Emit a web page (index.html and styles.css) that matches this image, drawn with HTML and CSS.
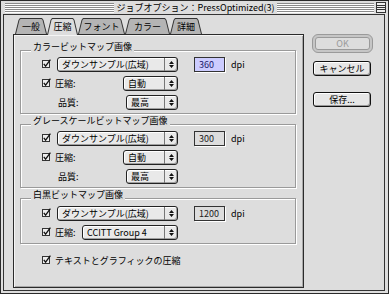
FILE: index.html
```html
<!DOCTYPE html>
<html lang="ja">
<head>
<meta charset="utf-8">
<title>ジョブオプション</title>
<link rel="stylesheet" href="styles.css">
</head>
<body>
<div class="window">
  <div class="titlebar">
    <span class="stripes"></span>
    <span class="title">ジョブオプション：PressOptimized(3)</span>
    <span class="title-right">
      <span class="stripes"></span>
      <svg class="collapse" width="10" height="11" viewBox="0 0 10 11"><rect x="0.5" y="0.5" width="9" height="10" fill="#eee" stroke="#333"/><path d="M1 3.5H9M1 5.5H9M1 7.5H9" stroke="#333"/></svg>
    </span>
  </div>
  <div class="content">
    <div class="left">
      <div class="tabs">
        <div class="tab t1"><span>一般</span></div>
        <div class="tab t2 active"><span>圧縮</span></div>
        <div class="tab t3"><span>フォント</span></div>
        <div class="tab t4"><span>カラー</span></div>
        <div class="tab t5"><span>詳細</span></div>
      </div>
      <div class="panel">
        <section class="group">
          <div class="group-title">カラービットマップ画像</div>
          <div class="group-box">
            <div class="row">
              <span class="lead">
                <svg class="check" width="9" height="10" viewBox="0 0 9 10"><rect x="0.5" y="1.5" width="7" height="7" fill="#eee" stroke="#333"/><path d="M1.8 4.8L3.6 7.2L8.4 0.6" fill="none" stroke="#111" stroke-width="1.3"/></svg>
                <span class="popup w-ds"><span class="popup-label">ダウンサンプル(広域)</span><span class="popup-arrows"><svg width="5" height="7" viewBox="0 0 5 7"><path d="M2.5 0L5 3H0Z M0 4H5L2.5 7Z" fill="#111"/></svg></span></span>
              </span>
              <span class="field focus">360</span>
              <span class="unit">dpi</span>
            </div>
            <div class="row">
              <span class="lead">
                <svg class="check" width="9" height="10" viewBox="0 0 9 10"><rect x="0.5" y="1.5" width="7" height="7" fill="#eee" stroke="#333"/><path d="M1.8 4.8L3.6 7.2L8.4 0.6" fill="none" stroke="#111" stroke-width="1.3"/></svg>
                <span class="label">圧縮:</span>
                <span class="popup w-auto"><span class="popup-label">自動</span><span class="popup-arrows"><svg width="5" height="7" viewBox="0 0 5 7"><path d="M2.5 0L5 3H0Z M0 4H5L2.5 7Z" fill="#111"/></svg></span></span>
              </span>
            </div>
            <div class="row">
              <span class="lead">
                <span class="label indent">品質:</span>
                <span class="popup w-max"><span class="popup-label">最高</span><span class="popup-arrows"><svg width="5" height="7" viewBox="0 0 5 7"><path d="M2.5 0L5 3H0Z M0 4H5L2.5 7Z" fill="#111"/></svg></span></span>
              </span>
            </div>
          </div>
        </section>

        <section class="group">
          <div class="group-title">グレースケールビットマップ画像</div>
          <div class="group-box">
            <div class="row">
              <span class="lead">
                <svg class="check" width="9" height="10" viewBox="0 0 9 10"><rect x="0.5" y="1.5" width="7" height="7" fill="#eee" stroke="#333"/><path d="M1.8 4.8L3.6 7.2L8.4 0.6" fill="none" stroke="#111" stroke-width="1.3"/></svg>
                <span class="popup w-ds"><span class="popup-label">ダウンサンプル(広域)</span><span class="popup-arrows"><svg width="5" height="7" viewBox="0 0 5 7"><path d="M2.5 0L5 3H0Z M0 4H5L2.5 7Z" fill="#111"/></svg></span></span>
              </span>
              <span class="field">300</span>
              <span class="unit">dpi</span>
            </div>
            <div class="row">
              <span class="lead">
                <svg class="check" width="9" height="10" viewBox="0 0 9 10"><rect x="0.5" y="1.5" width="7" height="7" fill="#eee" stroke="#333"/><path d="M1.8 4.8L3.6 7.2L8.4 0.6" fill="none" stroke="#111" stroke-width="1.3"/></svg>
                <span class="label">圧縮:</span>
                <span class="popup w-auto"><span class="popup-label">自動</span><span class="popup-arrows"><svg width="5" height="7" viewBox="0 0 5 7"><path d="M2.5 0L5 3H0Z M0 4H5L2.5 7Z" fill="#111"/></svg></span></span>
              </span>
            </div>
            <div class="row">
              <span class="lead">
                <span class="label indent">品質:</span>
                <span class="popup w-max"><span class="popup-label">最高</span><span class="popup-arrows"><svg width="5" height="7" viewBox="0 0 5 7"><path d="M2.5 0L5 3H0Z M0 4H5L2.5 7Z" fill="#111"/></svg></span></span>
              </span>
            </div>
          </div>
        </section>

        <section class="group">
          <div class="group-title">白黒ビットマップ画像</div>
          <div class="group-box short">
            <div class="row">
              <span class="lead">
                <svg class="check" width="9" height="10" viewBox="0 0 9 10"><rect x="0.5" y="1.5" width="7" height="7" fill="#eee" stroke="#333"/><path d="M1.8 4.8L3.6 7.2L8.4 0.6" fill="none" stroke="#111" stroke-width="1.3"/></svg>
                <span class="popup w-ds"><span class="popup-label">ダウンサンプル(広域)</span><span class="popup-arrows"><svg width="5" height="7" viewBox="0 0 5 7"><path d="M2.5 0L5 3H0Z M0 4H5L2.5 7Z" fill="#111"/></svg></span></span>
              </span>
              <span class="field">1200</span>
              <span class="unit">dpi</span>
            </div>
            <div class="row">
              <span class="lead">
                <svg class="check" width="9" height="10" viewBox="0 0 9 10"><rect x="0.5" y="1.5" width="7" height="7" fill="#eee" stroke="#333"/><path d="M1.8 4.8L3.6 7.2L8.4 0.6" fill="none" stroke="#111" stroke-width="1.3"/></svg>
                <span class="label">圧縮:</span>
                <span class="popup w-ccitt"><span class="popup-label">CCITT Group 4</span><span class="popup-arrows"><svg width="5" height="7" viewBox="0 0 5 7"><path d="M2.5 0L5 3H0Z M0 4H5L2.5 7Z" fill="#111"/></svg></span></span>
              </span>
            </div>
          </div>
        </section>

        <div class="row solo">
          <svg class="check" width="9" height="10" viewBox="0 0 9 10"><rect x="0.5" y="1.5" width="7" height="7" fill="#eee" stroke="#333"/><path d="M1.8 4.8L3.6 7.2L8.4 0.6" fill="none" stroke="#111" stroke-width="1.3"/></svg>
          <span class="label">テキストとグラフィックの圧縮</span>
        </div>
      </div>
    </div>
    <div class="buttons">
      <div class="default-ring"><span class="btn disabled">OK</span></div>
      <span class="btn cancel">キャンセル</span>
      <span class="btn save">保存...</span>
    </div>
  </div>
</div>
</body>
</html>
```
FILE: styles.css
```css
html, body {
  margin: 0;
  padding: 0;
  background: #dddddd;
}
body {
  font-family: "Noto Sans CJK JP", "Noto Sans", sans-serif;
  font-size: 9px;
  line-height: 12px;
  color: #000;
}
.window {
  width: 389px;
  height: 294px;
  box-sizing: border-box;
  border: 1px solid #2a2a2a;
  background: #dddddd;
  display: flex;
  flex-direction: column;
}
.titlebar {
  height: 13px;
  flex: none;
  display: grid;
  grid-template-columns: 1fr auto 1fr;
  align-items: center;
  padding: 0 2px 0 4px;
}
.stripes {
  display: block;
  height: 10px;
  background: repeating-linear-gradient(to bottom, #8a8a8a 0 1px, #ffffff 1px 2px);
}
.title {
  padding: 0 2px;
  line-height: 13px;
  white-space: nowrap;
}
.title-right {
  display: flex;
  align-items: center;
  gap: 2px;
}
.title-right .stripes { flex: 1; }
.collapse { display: block; flex: none; }

.content {
  flex: 1;
  margin: 0 3px 2px 2px;
  border: 1px solid #333;
  display: flex;
  padding: 3px 0 2px 9px;
  min-height: 0;
}
.left {
  width: 291px;
  display: flex;
  flex-direction: column;
}
.tabs {
  height: 16px;
  display: flex;
  align-items: flex-start;
  padding-left: 2px;
  flex: none;
}
.tab {
  height: 16px;
  box-sizing: border-box;
  padding: 1px 1px 0 1px;
  background: #333;
  clip-path: polygon(0 100%, 3.5px 2px, 5px 0, calc(100% - 5px) 0, calc(100% - 3.5px) 2px, 100% 100%);
  position: relative;
}
.tab span {
  display: block;
  height: 100%;
  background: #b4b4b4;
  clip-path: polygon(0 100%, 3.5px 1px, 4.5px 0, calc(100% - 4.5px) 0, calc(100% - 3.5px) 1px, 100% 100%);
  text-align: center;
  line-height: 15px;
}
.tab.active { height: 17px; z-index: 2; }
.tab.active span { background: #dddddd; }
.t1 { width: 32px; }
.t2 { width: 31px; }
.t3 { width: 47px; }
.t4 { width: 45px; }
.t5 { width: 32px; }

.panel {
  flex: 1;
  border: 1px solid #2a2a2a;
  box-shadow: inset 1px 1px 0 #f4f4f4, inset -1px -1px 0 #a8a8a8;
  padding: 6px 7px 0 6px;
  display: flex;
  flex-direction: column;
}
.group + .group { margin-top: 1px; }
.group-title {
  position: relative;
  margin: 0 0 -3px 11px;
  padding: 0 2px;
  width: max-content;
  background: #dddddd;
  line-height: 12px;
  white-space: nowrap;
}
.group-box {
  border: 1px solid #9a9a9a;
  box-shadow: inset 1px 1px 0 #fff, 1px 1px 0 #fff;
  padding: 6px 0 3px 21px;
  display: flex;
  flex-direction: column;
  gap: 4px;
}
.group-box.short { padding-top: 7px; }

.row {
  display: flex;
  align-items: center;
  height: 15px;
}
.lead {
  width: 136px;
  display: flex;
  align-items: center;
}
.check { display: block; flex: none; margin-top: -1px; }
.label { margin-left: 4px; white-space: nowrap; }
.label.indent { margin-left: 16px; }

.popup {
  margin-left: auto;
  height: 15px;
  box-sizing: border-box;
  border: 1px solid #222;
  border-radius: 3px;
  background: #e9e9e9;
  box-shadow: inset -1px -1px 0 #a0a0a0, inset 1px 1px 0 #fff;
  display: flex;
  align-items: stretch;
  overflow: hidden;
}
.popup-label {
  flex: 1;
  padding-left: 4px;
  line-height: 13px;
  white-space: nowrap;
}
.popup-arrows {
  width: 12px;
  border-left: 1px solid #777;
  display: flex;
  align-items: center;
  justify-content: center;
}
.popup-arrows svg { display: block; }
.w-ds { width: 121px; }
.w-auto { width: 55px; }
.w-max { width: 52px; }
.w-ccitt { width: 96px; }

.field {
  margin-left: 16px;
  width: 31px;
  height: 15px;
  box-sizing: border-box;
  border: 1px solid #333;
  box-shadow: 1px 1px 0 #fff;
  padding-left: 4px;
  line-height: 13px;
  color: #222;
}
.field.focus {
  background: #ccccff;
  color: #1a1a6a;
}
.unit { margin-left: 6px; }

.row.solo {
  margin-top: 9px;
  padding-left: 22px;
}

.buttons {
  margin: 16px 0 0 8px;
  width: 61px;
  display: flex;
  flex-direction: column;
}
.default-ring {
  height: 19px;
  box-sizing: border-box;
  border: 1px solid #9a9a9a;
  border-radius: 6px;
  background: #c6c6c6;
  padding: 2px;
}
.btn {
  display: block;
  box-sizing: border-box;
  height: 15px;
  border: 1px solid #111;
  border-radius: 3px;
  background: #e6e6e6;
  box-shadow: inset -1px -1px 0 #999, inset 1px 1px 0 #fff;
  text-align: center;
  line-height: 13px;
  white-space: nowrap;
}
.btn.disabled {
  height: 13px;
  line-height: 11px;
  border-color: #9a9a9a;
  color: #9a9a9a;
  background: #dddddd;
  box-shadow: none;
}
.btn.cancel { margin: 8px 2px 0 1px; }
.btn.save { margin: 16px 2px 0 1px; }
```
